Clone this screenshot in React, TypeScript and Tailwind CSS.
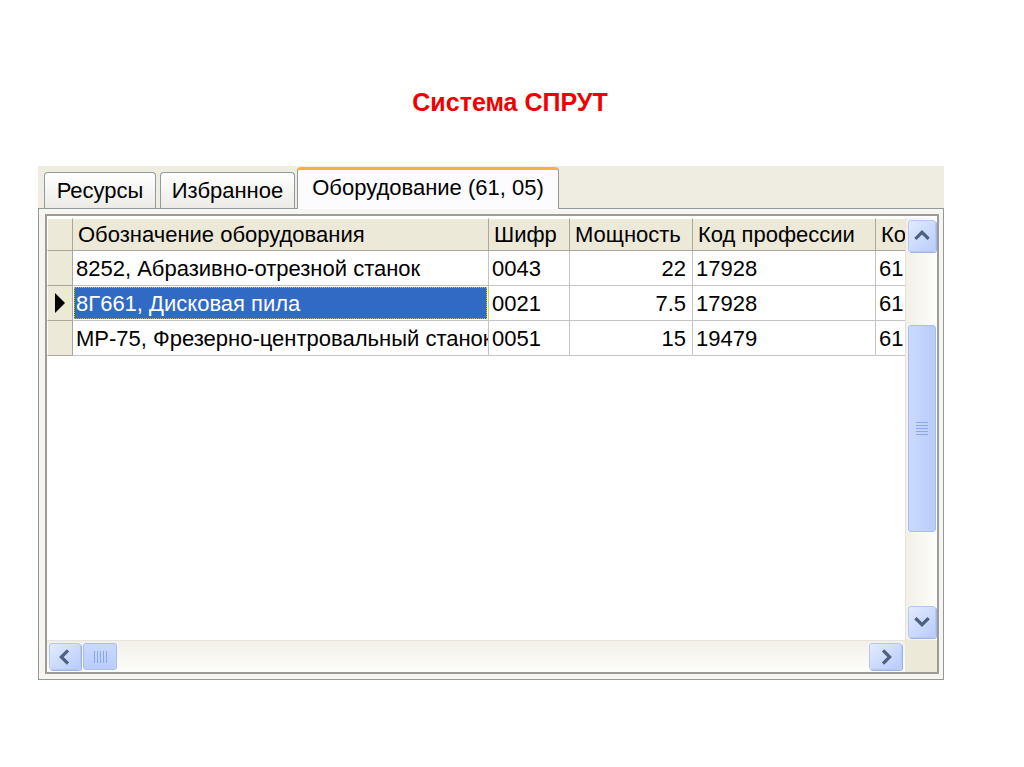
import React from 'react';

interface EquipmentRow {
    name: string;
    code: string;
    power: string;
    prof: string;
    extra: string;
    selected?: boolean;
}

const rows: EquipmentRow[] = [
    { name: '8252, Абразивно-отрезной станок', code: '0043', power: '22', prof: '17928', extra: '61' },
    { name: '8Г661, Дисковая пила', code: '0021', power: '7.5', prof: '17928', extra: '61', selected: true },
    { name: 'МР-75, Фрезерно-центровальный станок', code: '0051', power: '15', prof: '19479', extra: '61' },
];

const Arrow: React.FC<{ dir: 'up' | 'down' | 'left' | 'right' }> = ({ dir }) => {
    const points = {
        up: '6,14 12,8 18,14',
        down: '6,9 12,15 18,9',
        left: '14,6 8,12 14,18',
        right: '10,6 16,12 10,18',
    }[dir];
    return (
        <svg viewBox="0 0 24 24" className="w-[22px] h-[22px]">
            <polyline points={points} fill="none" stroke="#4d6185" strokeWidth="3.5" strokeLinecap="square" />
        </svg>
    );
};

const ScrollButton: React.FC<{ dir: 'up' | 'down' | 'left' | 'right'; className?: string }> = ({ dir, className = '' }) => (
    <div className={`flex items-center justify-center rounded-[3px] border border-[#b4c8f6] bg-gradient-to-br from-[#e3ebfe] to-[#b8ccfa] shadow-[1px_1px_0_#9fb3e6] ${className}`}>
        <Arrow dir={dir} />
    </div>
);

const App: React.FC = () => {
    return (
        <div className="w-[1024px] h-[767px] bg-white flex flex-col font-['Liberation_Sans',Arial,sans-serif] text-black overflow-hidden">
            <div className="mt-[88px] h-[28px] leading-[28px] text-center text-[25px] font-bold text-[#f00000] pr-[4px]">
                Система СПРУТ
            </div>

            <div className="mt-[50px] ml-[38px] w-[906px] h-[514px] flex flex-col bg-[#ece9d8]">
                {/* tabs */}
                <div className="h-[42px] flex items-end pl-[6px] gap-[4px] bg-[#efede2]">
                    <div className="w-[112px] h-[36px] rounded-t-[4px] border border-b-0 border-[#919b9c] bg-gradient-to-b from-white to-[#ecebe6] flex items-center justify-center text-[22px] leading-none">
                        Ресурсы
                    </div>
                    <div className="w-[135px] h-[36px] rounded-t-[4px] border border-b-0 border-[#919b9c] bg-gradient-to-b from-white to-[#ecebe6] flex items-center justify-center text-[22px] leading-none">
                        Избранное
                    </div>
                    <div className="-ml-[2px] w-[262px] h-[42px] rounded-t-[4px] border-x border-[#919b9c] border-t-[3px] border-t-[#f6b23c] bg-[#fcfcfe] flex items-center justify-center text-[22px] leading-none pb-[4px] relative -mb-[1px] z-10">
                        Оборудование (61, 05)
                    </div>
                </div>

                {/* tab body */}
                <div className="flex-1 border border-[#919b9c] bg-[#f6f5f0] pl-[6px] pt-[5px] pr-[4px] pb-[5px] flex">
                    <div className="flex-1 flex flex-col border-2 border-[#9d9c99] bg-white pt-[2px]">
                        <div className="h-[422px] flex">
                            {/* table */}
                            <div className="w-[858px] overflow-hidden">
                                <div className="flex h-[33px] bg-[#ece9d8] text-[22px] whitespace-nowrap">
                                    <div className="w-[26px] shrink-0 border-r border-b border-[#aca899] border-l border-t border-l-white border-t-white"></div>
                                    <div className="w-[416px] shrink-0 flex items-center pl-[5px] border-r border-b border-[#aca899] border-t border-t-white overflow-hidden">Обозначение оборудования</div>
                                    <div className="w-[81px] shrink-0 flex items-center pl-[5px] border-r border-b border-[#aca899] border-t border-t-white overflow-hidden">Шифр</div>
                                    <div className="w-[123px] shrink-0 flex items-center pl-[5px] border-r border-b border-[#aca899] border-t border-t-white overflow-hidden">Мощность</div>
                                    <div className="w-[183px] shrink-0 flex items-center pl-[5px] border-r border-b border-[#aca899] border-t border-t-white overflow-hidden">Код профессии</div>
                                    <div className="w-[40px] shrink-0 flex items-center pl-[5px] border-b border-[#aca899] border-t border-t-white overflow-hidden">Код</div>
                                </div>
                                {rows.map((r) => (
                                    <div key={r.code} className="flex h-[35px] text-[22px] whitespace-nowrap">
                                        <div className="w-[26px] shrink-0 bg-[#ece9d8] border-r border-b border-[#aca899] border-l border-l-white flex items-center justify-center">
                                            {r.selected && (
                                                <svg viewBox="0 0 12 22" className="w-[12px] h-[22px]">
                                                    <polygon points="1,1 11,11 1,21" fill="#000" />
                                                </svg>
                                            )}
                                        </div>
                                        <div className="w-[416px] shrink-0 border-r border-b border-[#c4c4c4] overflow-hidden flex">
                                            {r.selected ? (
                                                <div className="flex-1 m-[1px] bg-[#316ac5] text-white flex items-center pl-[2px] outline-1 outline-dotted outline-[#d8b040] -outline-offset-1">
                                                    {r.name}
                                                </div>
                                            ) : (
                                                <div className="flex-1 flex items-center pl-[3px]">{r.name}</div>
                                            )}
                                        </div>
                                        <div className="w-[81px] shrink-0 flex items-center pl-[3px] border-r border-b border-[#c4c4c4] overflow-hidden">{r.code}</div>
                                        <div className="w-[123px] shrink-0 flex items-center justify-end pr-[6px] border-r border-b border-[#c4c4c4] overflow-hidden">{r.power}</div>
                                        <div className="w-[183px] shrink-0 flex items-center pl-[3px] border-r border-b border-[#c4c4c4] overflow-hidden">{r.prof}</div>
                                        <div className="w-[40px] shrink-0 flex items-center pl-[3px] border-b border-[#c4c4c4] overflow-hidden">{r.extra}</div>
                                    </div>
                                ))}
                            </div>

                            {/* vertical scrollbar */}
                            <div className="flex-1 flex flex-col py-[2px] pl-[2px] pr-[1px] bg-gradient-to-r from-[#f2f0e8] to-[#fdfdfa] border-l border-[#e6e4dc]">
                                <ScrollButton dir="up" className="h-[32px]" />
                                <div className="h-[73px]"></div>
                                <div className="h-[207px] rounded-[3px] border border-[#a9bdf2] bg-gradient-to-r from-[#cbd9fd] to-[#b9cdfb] flex items-center justify-center">
                                    <div className="flex flex-col gap-[2px]">
                                        <div className="w-[12px] h-[1px] bg-[#8ea7e6]"></div>
                                        <div className="w-[12px] h-[1px] bg-[#8ea7e6]"></div>
                                        <div className="w-[12px] h-[1px] bg-[#8ea7e6]"></div>
                                        <div className="w-[12px] h-[1px] bg-[#8ea7e6]"></div>
                                        <div className="w-[12px] h-[1px] bg-[#8ea7e6]"></div>
                                    </div>
                                </div>
                                <div className="flex-1"></div>
                                <ScrollButton dir="down" className="h-[32px]" />
                            </div>
                        </div>

                        {/* horizontal scrollbar */}
                        <div className="flex-1 flex">
                            <div className="w-[858px] flex items-center pl-[2px] pr-[3px] py-[2px] bg-gradient-to-b from-[#f2f0e8] to-[#fdfdfa] border-t border-[#e6e4dc] gap-[2px]">
                                <ScrollButton dir="left" className="w-[32px] h-full" />
                                <div className="w-[34px] h-full rounded-[3px] border border-[#a9bdf2] bg-gradient-to-b from-[#cbd9fd] to-[#b9cdfb] flex items-center justify-center gap-[2px]">
                                    <div className="w-[1px] h-[12px] bg-[#8ea7e6]"></div>
                                    <div className="w-[1px] h-[12px] bg-[#8ea7e6]"></div>
                                    <div className="w-[1px] h-[12px] bg-[#8ea7e6]"></div>
                                    <div className="w-[1px] h-[12px] bg-[#8ea7e6]"></div>
                                    <div className="w-[1px] h-[12px] bg-[#8ea7e6]"></div>
                                </div>
                                <div className="flex-1"></div>
                                <ScrollButton dir="right" className="w-[33px] h-full" />
                            </div>
                            <div className="flex-1 bg-[#ece9d8]"></div>
                        </div>
                    </div>
                </div>
            </div>
        </div>
    );
};

export default App;
